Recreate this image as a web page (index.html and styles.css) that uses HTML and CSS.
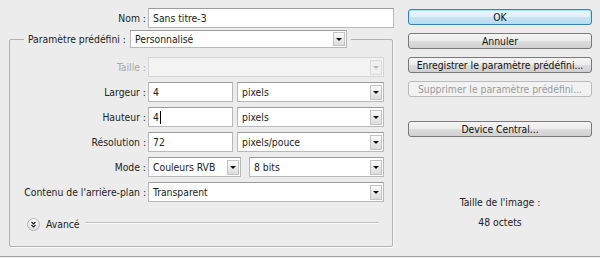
FILE: index.html
```html
<!DOCTYPE html>
<html lang="fr">
<head>
    <meta charset="UTF-8">
    <title>Nouveau</title>
    <link rel="stylesheet" href="styles.css">
</head>
<body>

<div class="dialog">
    <!-- left part: document settings -->
    <div class="main">
        <div class="row name-row">
            <label class="lbl">Nom :</label>
            <div class="field wide">Sans titre-3</div>
        </div>

        <fieldset class="group">
            <legend class="preset">
                <span class="preset-lbl">Paramètre prédéfini :</span>
                <div class="combo preset-combo"><span class="combo-text">Personnalisé</span><span class="combo-btn"></span></div>
            </legend>

            <div class="row">
                <label class="lbl disabled-lbl">Taille :</label>
                <div class="combo wide disabled"><span class="combo-text"></span><span class="combo-btn"></span></div>
            </div>
            <div class="row">
                <label class="lbl">Largeur :</label>
                <div class="field num">4</div>
                <div class="combo unit"><span class="combo-text">pixels</span><span class="combo-btn"></span></div>
            </div>
            <div class="row">
                <label class="lbl">Hauteur :</label>
                <div class="field num">4<span class="caret"></span></div>
                <div class="combo unit"><span class="combo-text">pixels</span><span class="combo-btn"></span></div>
            </div>
            <div class="row">
                <label class="lbl">Résolution :</label>
                <div class="field num">72</div>
                <div class="combo unit"><span class="combo-text">pixels/pouce</span><span class="combo-btn"></span></div>
            </div>
            <div class="row">
                <label class="lbl">Mode :</label>
                <div class="combo mode"><span class="combo-text">Couleurs RVB</span><span class="combo-btn"></span></div>
                <div class="combo bits"><span class="combo-text">8 bits</span><span class="combo-btn"></span></div>
            </div>
            <div class="row">
                <label class="lbl">Contenu de l'arrière-plan :</label>
                <div class="combo wide"><span class="combo-text">Transparent</span><span class="combo-btn"></span></div>
            </div>

            <div class="advanced">
                <svg class="adv-icon" width="13" height="13" viewBox="0 0 13 13">
                    <defs>
                        <linearGradient id="advg" x1="0" y1="0" x2="0" y2="1">
                            <stop offset="0" stop-color="#ffffff"/>
                            <stop offset="1" stop-color="#dcdcdc"/>
                        </linearGradient>
                    </defs>
                    <circle cx="6.5" cy="6.5" r="6" fill="url(#advg)" stroke="#b0b0b0"/>
                    <path d="M4.5 4 L6.5 6 L8.5 4 M4.5 7 L6.5 9 L8.5 7" fill="none" stroke="#222" stroke-width="1.2"/>
                </svg>
                <span class="adv-text">Avancé</span>
                <span class="adv-line"></span>
            </div>
        </fieldset>
    </div>

    <!-- right part: buttons -->
    <div class="side">
        <button class="btn default">OK</button>
        <button class="btn">Annuler</button>
        <button class="btn">Enregistrer le paramètre prédéfini...</button>
        <button class="btn" disabled>Supprimer le paramètre prédéfini...</button>
        <button class="btn central">Device Central...</button>

        <div class="image-size">
            <div>Taille de l'image :</div>
            <div>48 octets</div>
        </div>
    </div>
</div>
<div class="dialog-foot"></div>

</body>
</html>
```

FILE: styles.css
```css
html {
    background-color: #ececec;
}
body {
    margin: 0;
    font-family: "DejaVu Sans", "Liberation Sans", sans-serif;
    font-stretch: condensed;
    font-size: 10.3px;
    color: #222;
}
.dialog {
    display: flex;
    height: 256px;
}
.main {
    width: 385px;
    padding-left: 9px;
}
.row {
    display: flex;
    align-items: center;
    height: 20px;
    margin-bottom: 5px;
}
.name-row {
    margin-top: 8px;
    margin-bottom: 0;
    padding-left: 1px;
}
.lbl {
    width: 136px;
    margin-right: 2px;
    text-align: right;
    white-space: nowrap;
}
.disabled-lbl {
    color: #a6a6a6;
}
.field,
.combo {
    box-sizing: border-box;
    height: 20px;
    display: flex;
    align-items: center;
    background-color: #fff;
    border: 1px solid #b9b9b9;
    border-top-color: #9c9c9c;
    padding-left: 4px;
    white-space: nowrap;
}
.wide {
    width: 236px;
}
.name-row .wide {
    width: 246px;
}
.num {
    width: 85px;
}
.unit {
    width: 147px;
    margin-left: 4px;
}
.mode {
    width: 93px;
}
.bits {
    width: 135px;
    margin-left: 8px;
}
.caret {
    display: inline-block;
    width: 1px;
    height: 13px;
    margin-left: 1px;
    background-color: #000;
}
.combo-text {
    flex: 1;
}
.combo-btn {
    position: relative;
    box-sizing: border-box;
    width: 12px;
    height: 15px;
    margin-right: 1px;
    border: 1px solid #c4c4c4;
    background: linear-gradient(#fafafa, #dcdcdc);
}
.combo-btn::after {
    content: "";
    position: absolute;
    left: 2px;
    top: 5px;
    border-left: 3px solid transparent;
    border-right: 3px solid transparent;
    border-top: 3px solid #111;
}
.combo.disabled {
    background-color: #f3f3f3;
    border-color: #d6d6d6;
}
.combo.disabled .combo-btn {
    border-color: #dadada;
    background: #f0f0f0;
}
.combo.disabled .combo-btn::after {
    border-top-color: #b5b5b5;
}

/* preset group */
.group {
    margin: 2px 1px 0 0;
    padding: 9px 8px 15px 0;
    border: 1px solid #b2b2b2;
    border-radius: 2px;
    box-shadow: 1px 1px 0 #fafafa;
    min-width: 0;
}
.preset {
    display: flex;
    align-items: center;
    margin-left: 14px;
    padding: 0 4px;
}
.preset-lbl {
    margin-right: 4px;
}
.preset-combo {
    width: 217px;
    height: 18px;
}
.preset-combo .combo-btn {
    height: 14px;
}

.advanced {
    display: flex;
    align-items: center;
    height: 14px;
    margin-top: 15px;
    padding-left: 17px;
}
.adv-icon {
    display: block;
}
.adv-text {
    margin-left: 6px;
}
.adv-line {
    width: 294px;
    height: 0;
    margin-left: 5px;
    margin-top: -2px;
    border-top: 1px solid #c2c2c2;
    border-bottom: 1px solid #fafafa;
}

/* buttons column */
.side {
    width: 184px;
    margin-left: 14px;
    padding-top: 9px;
    display: flex;
    flex-direction: column;
}
.btn {
    height: 16px;
    margin-bottom: 8px;
    padding: 0;
    font-family: "DejaVu Sans", "Liberation Sans", sans-serif;
    font-stretch: condensed;
    font-size: 10.3px;
    line-height: 14px;
    color: #111;
    border: 1px solid #7a7a7a;
    border-radius: 3px;
    background: linear-gradient(#f4f4f4 0%, #ececec 50%, #dddddd 51%, #d0d0d0 100%);
    cursor: pointer;
}
.btn.default {
    border-color: #3c7fb1;
    box-shadow: inset 0 0 0 1px #a8e4f8;
    background: linear-gradient(#eaf6fd 0%, #dff0fa 50%, #c8e4f4 51%, #b8dcf0 100%);
}
.btn:disabled {
    color: #9a9a9a;
    border-color: #b8bcbe;
    background: #f2f2f2;
    cursor: default;
}
.btn.central {
    margin-top: 16px;
}
.image-size {
    margin-top: 47px;
    text-align: center;
    line-height: 20px;
}

.dialog-foot {
    height: 1px;
    border-top: 1px solid #a2a2a2;
    background-color: #f4f4f4;
}
```
